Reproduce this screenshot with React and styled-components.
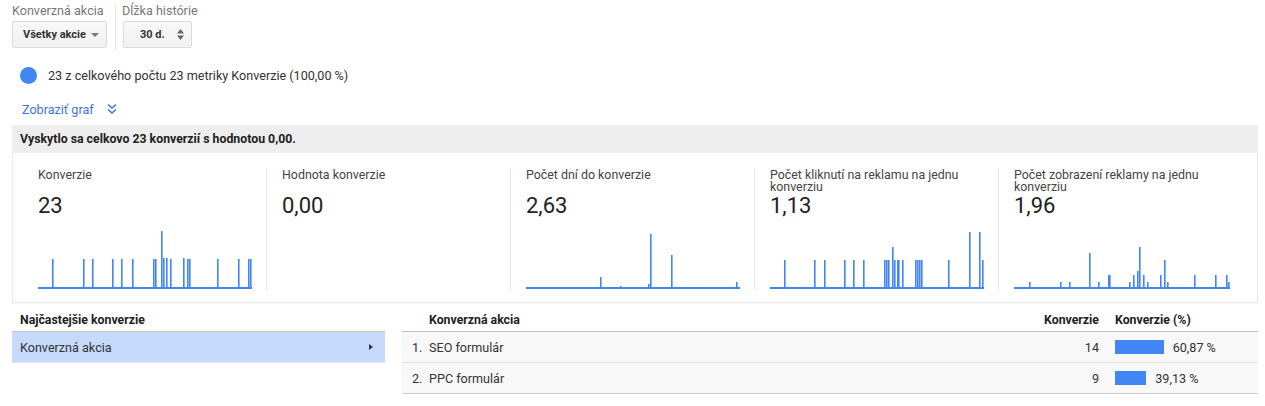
import styled, { createGlobalStyle } from "styled-components"

const GlobalStyle = createGlobalStyle`
  html, body { margin: 0; padding: 0; background: #fff; }
  body { font-family: Roboto, "Liberation Sans", Arial, sans-serif; color: #333; }
`

const Page = styled.div`
  width: 1265px;
  height: 406px;
  box-sizing: border-box;
  padding: 0 7px 0 12px;
  overflow: hidden;
`

const Controls = styled.div`
  display: flex;
  align-items: stretch;
  height: 50px;
  padding-top: 4px;
  box-sizing: border-box;
`

const Field = styled.div`
  display: flex;
  flex-direction: column;
  padding-right: ${(p) => (p.$sep ? "8px" : "0")};
  margin-right: ${(p) => (p.$sep ? "6px" : "0")};
  border-right: ${(p) => (p.$sep ? "1px solid #e6e6e6" : "none")};
`

const FieldLabel = styled.div`
  font-size: 12.6px;
  line-height: 14px;
  color: #777;
  height: 17px;
`

const Select = styled.div`
  display: flex;
  align-items: center;
  justify-content: space-between;
  box-sizing: border-box;
  width: ${(p) => p.$w}px;
  height: 27px;
  margin-left: ${(p) => p.$ml || 0}px;
  padding: 0 7px 0 ${(p) => p.$pl}px;
  background: linear-gradient(#f8f8f8, #f1f1f1);
  border: 1px solid #dcdcdc;
  border-radius: 2px;
  font-size: 11px;
  font-weight: bold;
  color: #333;
`

const Legend = styled.div`
  display: flex;
  align-items: center;
  gap: 11px;
  height: 20px;
  margin: 15px 0 0 8px;
  font-size: 12.6px;
  color: #333;
`

const Dot = styled.span`
  width: 17px;
  height: 17px;
  border-radius: 50%;
  background: #4285f4;
`

const GraphLink = styled.div`
  display: flex;
  align-items: center;
  gap: 13px;
  height: 18px;
  margin: 15px 0 0 10px;
  font-size: 12.6px;
  color: #3a76e0;
`

const Summary = styled.div`
  display: flex;
  align-items: center;
  height: 28px;
  margin-top: 7px;
  padding-left: 8px;
  background: #eeeeee;
  font-size: 12.3px;
  font-weight: bold;
  color: #222;
`

const Card = styled.div`
  display: grid;
  grid-template-columns: repeat(5, 244px);
  height: 150px;
  box-sizing: border-box;
  padding: 15px 9px 0;
  border: 1px solid #e9e9e9;
  border-top: none;
  box-shadow: 0 1px 1px rgba(0, 0, 0, 0.03);
`

const Metric = styled.div`
  box-sizing: border-box;
  height: 122px;
  padding: 0 0 0 15px;
  border-left: 1px solid ${(p) => (p.$first ? "transparent" : "#e6e6e6")};
  display: flex;
  flex-direction: column;
`

const MetricLabel = styled.div`
  height: 25px;
  padding-top: 1px;
  font-size: 12.4px;
  line-height: 12px;
  color: #444;
  width: 205px;
`

const MetricValue = styled.div`
  font-size: 22px;
  line-height: 24px;
  color: #222;
  height: 36px;
`

const Bottom = styled.div`
  display: flex;
  margin-top: 6px;
  align-items: flex-start;
`

const LeftPanel = styled.div`
  width: 373px;
  margin-right: 17px;
`

const HeadRow = styled.div`
  display: flex;
  align-items: center;
  height: 22px;
  padding-left: ${(p) => p.$pl}px;
  border-bottom: 1px solid ${(p) => p.$line};
  font-size: 12.3px;
  font-weight: bold;
  color: #222;
`

const SelectedRow = styled.div`
  display: flex;
  align-items: center;
  justify-content: space-between;
  height: 30px;
  padding: 0 12px 0 8px;
  background: #c6dafc;
  border-bottom: 1px solid #e2e8f2;
  font-size: 12.6px;
  color: #333;
`

const Table = styled.div`
  flex: 1;
`

const Grid = styled.div`
  display: grid;
  grid-template-columns: 10px 17px 1fr 80px 16px 143px;
  align-items: center;
`

const HeadGrid = styled(Grid)`
  height: 22px;
  border-bottom: 1px solid #bdbdbd;
  font-size: 12.3px;
  font-weight: bold;
  color: #222;
`

const BodyRow = styled(Grid)`
  height: 30px;
  background: #f8f8f8;
  border-bottom: 1px solid ${(p) => (p.$last ? "#cfcfcf" : "#e3e3e3")};
  font-size: 12.6px;
  color: #333;
`

const Cell = styled.div`
  grid-column: ${(p) => p.$col};
  text-align: ${(p) => (p.$right ? "right" : "left")};
  white-space: nowrap;
`

const PctCell = styled.div`
  grid-column: 6;
  display: flex;
  align-items: center;
  gap: 9px;
  white-space: nowrap;
`

const Bar = styled.span`
  display: inline-block;
  height: 14px;
  background: #4285f4;
`

const Spikes = ({ data, width = 214 }) => (
  <svg width={width + 2} height="60" style={{ display: "block" }}>
    {data.map(([x, h], i) => (
      <rect key={i} x={x} y={58 - h} width="1.6" height={h} fill="#4285f4" />
    ))}
    <rect x="0" y="57" width={width} height="2" fill="#4285f4" />
  </svg>
)

const metrics = [
  {
    label: "Konverzie",
    value: "23",
    spikes: [[14,29],[45,29],[54,29],[74,29],[83,29],[94,29],[115,29],[117,29],[123,57],[125,30],[128,30],[132,29],[145,30],[149,29],[151,29],[179,29],[200,29],[210,29],[212,29]],
  },
  { label: "Hodnota konverzie", value: "0,00", spikes: null },
  {
    label: "Počet dní do konverzie",
    value: "2,63",
    spikes: [[74,11],[94,2],[122,4],[124,54],[145,33],[210,6]],
  },
  {
    label: "Počet kliknutí na reklamu na jednu konverziu",
    value: "1,13",
    spikes: [[14,28],[44,28],[54,28],[74,28],[83,28],[93,28],[114,28],[116,28],[118,28],[122,41],[124,28],[127,28],[128,28],[132,28],[145,28],[147,28],[149,28],[151,28],[178,28],[199,56],[209,56],[212,28]],
  },
  {
    label: "Počet zobrazení reklamy na jednu konverziu",
    value: "1,96",
    spikes: [[15,6],[46,6],[55,6],[75,35],[84,6],[94,13],[95,13],[115,6],[119,13],[123,17],[125,41],[129,13],[133,6],[146,13],[150,28],[153,6],[180,13],[201,13],[212,13],[214,6]],
  },
]

const rows = [
  { n: "1.", name: "SEO formulár", conv: 14, pct: 60.87 },
  { n: "2.", name: "PPC formulár", conv: 9, pct: 39.13 },
]

const App = () => (
  <>
    <GlobalStyle />
    <Page>
      <Controls>
        <Field $sep>
          <FieldLabel>Konverzná akcia</FieldLabel>
          <Select $w={95} $pl={10}>
            Všetky akcie
            <svg width="8" height="4"><path d="M0 0h8L4 4z" fill="#777" /></svg>
          </Select>
        </Field>
        <Field>
          <FieldLabel>Dĺžka histórie</FieldLabel>
          <Select $w={69} $pl={16} $ml={1}>
            30 d.
            <svg width="7" height="11">
              <path d="M0 4.5L3.5 0L7 4.5z M0 6.5L3.5 11L7 6.5z" fill="#666" />
            </svg>
          </Select>
        </Field>
      </Controls>

      <Legend>
        <Dot />
        23 z celkového počtu 23 metriky Konverzie (100,00 %)
      </Legend>

      <GraphLink>
        Zobraziť graf
        <svg width="10" height="12" viewBox="0 0 10 12">
          <path d="M1 1.5l4 3.5 4-3.5M1 6.5l4 3.5 4-3.5" stroke="#3a76e0" strokeWidth="1.6" fill="none" />
        </svg>
      </GraphLink>

      <Summary>Vyskytlo sa celkovo 23 konverzií s hodnotou 0,00.</Summary>

      <Card>
        {metrics.map((m, i) => (
          <Metric key={m.label} $first={i === 0}>
            <MetricLabel>{m.label}</MetricLabel>
            <MetricValue>{m.value}</MetricValue>
            {m.spikes && <Spikes data={m.spikes} width={i === 4 ? 216 : 214} />}
          </Metric>
        ))}
      </Card>

      <Bottom>
        <LeftPanel>
          <HeadRow $pl={8} $line="#c4c4c4">Najčastejšie konverzie</HeadRow>
          <SelectedRow>
            Konverzná akcia
            <svg width="4" height="6"><path d="M0 0L4 3L0 6z" fill="#333" /></svg>
          </SelectedRow>
        </LeftPanel>
        <Table>
          <HeadGrid>
            <Cell $col={3}>Konverzná akcia</Cell>
            <Cell $col={4} $right>Konverzie</Cell>
            <Cell $col={6}>Konverzie (%)</Cell>
          </HeadGrid>
          {rows.map((r, i) => (
            <BodyRow key={r.n} $last={i === rows.length - 1}>
              <Cell $col={2}>{r.n}</Cell>
              <Cell $col={3}>{r.name}</Cell>
              <Cell $col={4} $right>{r.conv}</Cell>
              <PctCell>
                <Bar style={{ width: `${(r.pct / 100) * 80}px` }} />
                {r.pct.toFixed(2).replace(".", ",")} %
              </PctCell>
            </BodyRow>
          ))}
        </Table>
      </Bottom>
    </Page>
  </>
)

export default App
